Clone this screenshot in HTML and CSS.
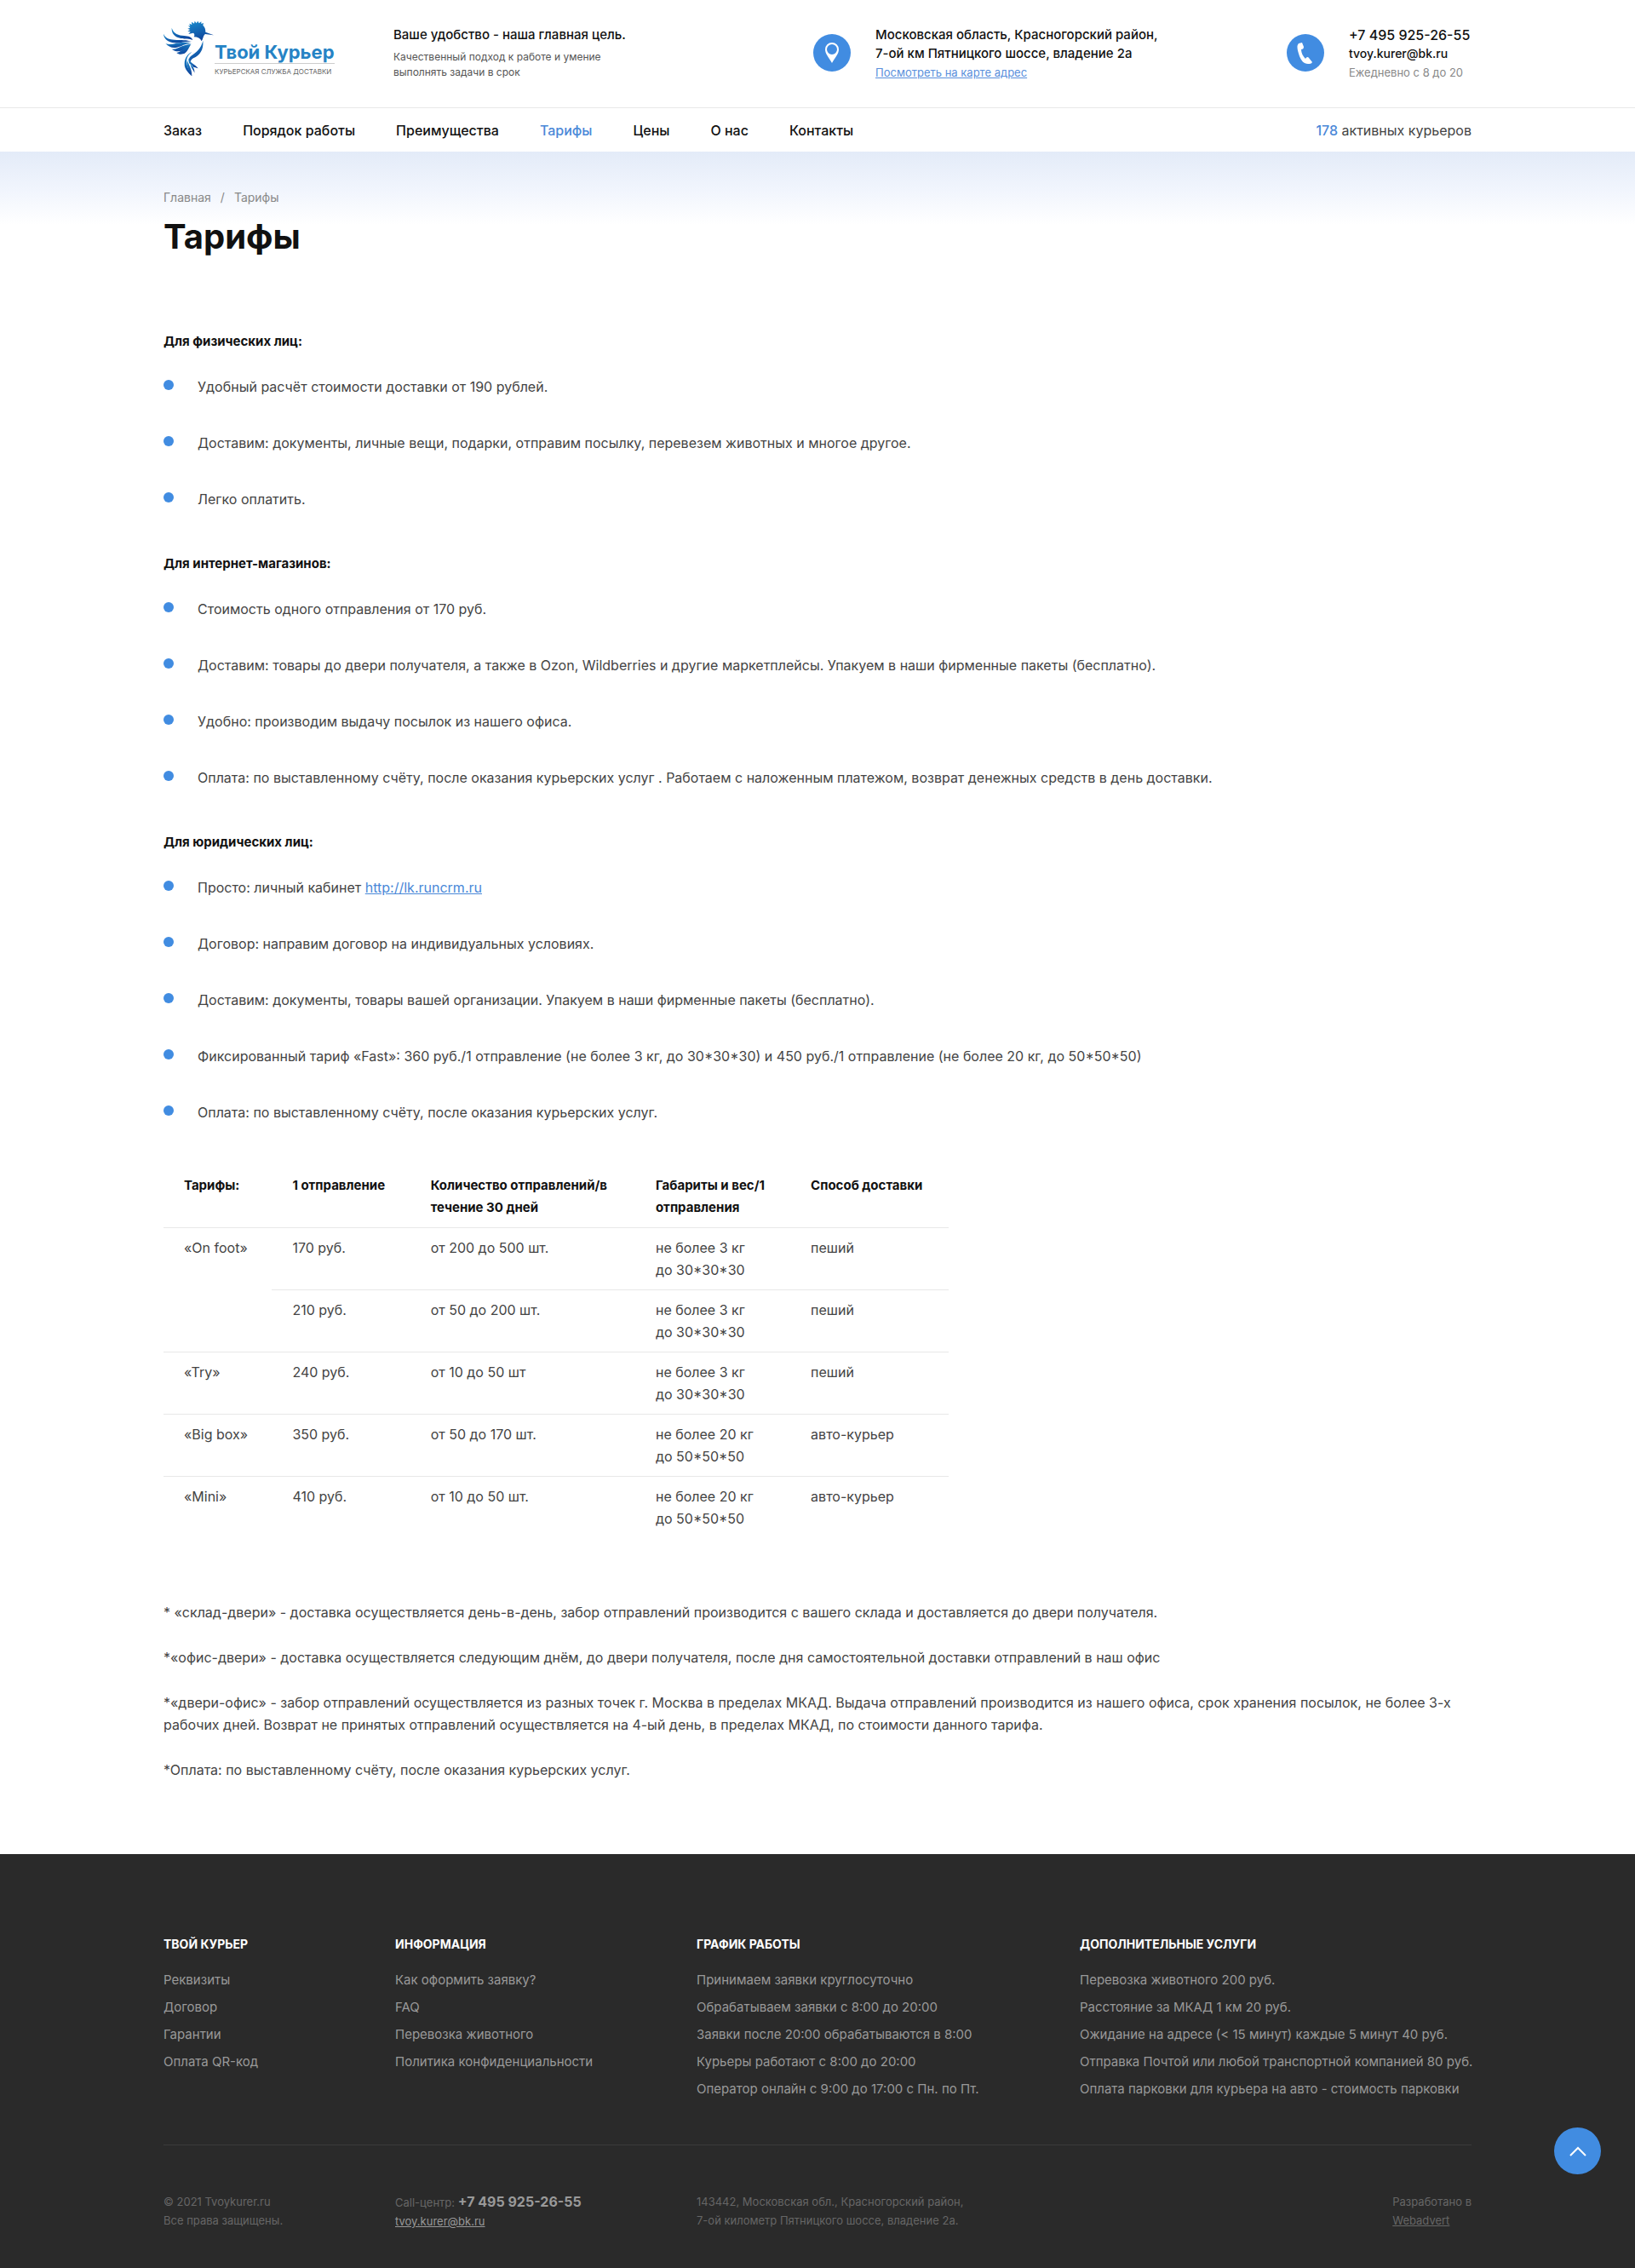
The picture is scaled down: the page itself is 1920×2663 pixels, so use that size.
FILE: index.html
```html
<!DOCTYPE html>
<html lang="ru">

<head>
    <meta charset="UTF-8">
    <meta name="viewport" content="width=device-width, initial-scale=1.0">
    <title>Тарифы</title>
    <link rel="stylesheet" href="styles.css">
</head>

<body>
    <header class="header">
        <div class="container header-top">
            <a href="#" class="logo">
                <svg class="logo-bird" viewBox="36 70 180 198" aria-hidden="true">
                    <defs>
                        <linearGradient id="bird" x1="0" y1="0" x2="0.4" y2="1">
                            <stop offset="0" stop-color="#1a8fd0" />
                            <stop offset="1" stop-color="#0f459c" />
                        </linearGradient>
                    </defs>
                    <g fill="url(#bird)">
                        <!-- голова с хохолком -->
                        <path d="M123 87l7 3-3-9 9 4-1-10 9 6 2-9 6 8 5-8 4 8 8-6 0 8 8-3-2 8c7 6 9 14 9 24l29 11-30-4c-8 6-7 17-13 25-4-10-14-15-27-15 4-6 2-11-2-14l-17 4 7-8-10-2 9-5-9-4 9-3z" />
                        <!-- крылья -->
                        <path d="M65 96c7 22 24 26 44 28 16 1 26 5 30 15-12-6-26-2-42-6-22-5-33-17-32-37z" />
                        <path d="M36 117c8 17 20 19 38 21 24 2 45-1 61 7-25-3-37 7-59 4-25-3-39-14-40-32z" />
                        <path d="M43 150c18 10 35-1 57-2 14-1 25 0 34 3-21-1-32 10-51 14-17 3-31-3-40-15z" />
                        <path d="M65 171c14 2 24-6 38-11 11-4 21-7 31-7-14 7-19 17-32 23-13 5-27 3-37-5z" />
                        <path d="M82 184c15-2 22-17 51-30-10 13-12 30-28 34-9 3-17 1-23-4z" />
                        <!-- туловище -->
                        <path d="M175 141c3 33-11 51-34 62-8 5-11 12-13 20-3-11-4-20 4-27 20-15 36-26 43-55z" />
                        <!-- хвост -->
                        <path d="M136 181c-14 11-20 22-18 39 1 18 12 26 18 46-12-12-27-24-26-44 0-19 10-33 26-41z" />
                        <path d="M125 203c3 18 24 22 33 36-16-6-20-3-20-10-9-4-16-13-13-26z" />
                        <path d="M120 211c6 20 16 27 16 55-9-17-20-31-16-55z" />
                        <path d="M131 222c7 10 16 17 14 33-3-12-14-18-14-33z" />
                    </g>
                </svg>
                <span class="logo-text">
                    <span class="logo-name">Твой Курьер</span>
                    <span class="logo-tagline">Курьерская служба доставки</span>
                </span>
            </a>

            <div class="slogan">
                <p class="strong">Ваше удобство - наша главная цель.</p>
                <p class="slogan-text">Качественный подход к работе и умение<br>выполнять задачи в срок</p>
            </div>

            <div class="contact">
                <svg class="contact-icon" viewBox="0 0 44 44" aria-hidden="true">
                    <circle cx="22" cy="22" r="22" fill="#418ce1" />
                    <path fill="#fff" fill-rule="evenodd" d="M22 10a8 8 0 0 1 8 8c0 5-4 9-8 16-4-7-8-11-8-16a8 8 0 0 1 8-8zm0 2a6 6 0 1 0 0 12 6 6 0 0 0 0-12z" />
                </svg>
                <div>
                    <p class="strong">Московская область, Красногорский район,</p>
                    <p class="strong">7-ой км Пятницкого шоссе, владение 2а</p>
                    <a href="#" class="map-link">Посмотреть на карте адрес</a>
                </div>
            </div>

            <div class="contact">
                <svg class="contact-icon" viewBox="0 0 44 44" aria-hidden="true">
                    <circle cx="22" cy="22" r="22" fill="#418ce1" />
                    <path fill="#fff" d="M14 11l4-1 2 5c0 2-1 3-3 3 0 4 2 8 5 11 1-2 3-3 4-1l4 5c-1 2-3 2-5 2-5 0-8-4-10-9-2-6-4-12-1-15z" />
                </svg>
                <div>
                    <a href="tel:+74959252655" class="phone">+7 495 925-26-55</a>
                    <a href="mailto:tvoy.kurer@bk.ru" class="mail">tvoy.kurer@bk.ru</a>
                    <p class="schedule">Ежедневно с 8 до 20</p>
                </div>
            </div>
        </div>

        <div class="nav-line">
            <div class="container nav-row">
                <nav class="nav">
                    <a href="#">Заказ</a>
                    <a href="#">Порядок работы</a>
                    <a href="#">Преимущества</a>
                    <a href="#" class="active">Тарифы</a>
                    <a href="#">Цены</a>
                    <a href="#">О нас</a>
                    <a href="#">Контакты</a>
                </nav>
                <p class="couriers"><b>178</b> активных курьеров</p>
            </div>
        </div>
    </header>

    <main class="main">
        <div class="container">
            <div class="breadcrumbs">
                <a href="#">Главная</a>
                <span>/</span>
                <span>Тарифы</span>
            </div>
            <h1>Тарифы</h1>

            <div class="content">
                <h2>Для физических лиц:</h2>
                <ul>
                    <li>Удобный расчёт стоимости доставки от 190 рублей.</li>
                    <li>Доставим: документы, личные вещи, подарки, отправим посылку, перевезем животных и многое другое.</li>
                    <li>Легко оплатить.</li>
                </ul>

                <h2>Для интернет-магазинов:</h2>
                <ul>
                    <li>Стоимость одного отправления от 170 руб.</li>
                    <li>Доставим: товары до двери получателя, а также в Ozon, Wildberries и другие маркетплейсы. Упакуем в наши фирменные пакеты (бесплатно).</li>
                    <li>Удобно: производим выдачу посылок из нашего офиса.</li>
                    <li>Оплата: по выставленному счёту, после оказания курьерских услуг . Работаем с наложенным платежом, возврат денежных средств в день доставки.</li>
                </ul>

                <h2>Для юридических лиц:</h2>
                <ul>
                    <li>Просто: личный кабинет <a href="http://lk.runcrm.ru">http://lk.runcrm.ru</a></li>
                    <li>Договор: направим договор на индивидуальных условиях.</li>
                    <li>Доставим: документы, товары вашей организации. Упакуем в наши фирменные пакеты (бесплатно).</li>
                    <li>Фиксированный тариф «Fast»: 360 руб./1 отправление (не более 3 кг, до 30*30*30) и 450 руб./1 отправление (не более 20 кг, до 50*50*50)</li>
                    <li>Оплата: по выставленному счёту, после оказания курьерских услуг.</li>
                </ul>

                <table class="tariffs">
                    <thead>
                        <tr>
                            <th>Тарифы:</th>
                            <th>1 отправление</th>
                            <th>Количество отправлений/в<br>течение 30 дней</th>
                            <th>Габариты и вес/1<br>отправления</th>
                            <th>Способ доставки</th>
                        </tr>
                    </thead>
                    <tbody>
                        <tr>
                            <td rowspan="2">«On foot»</td>
                            <td>170 руб.</td>
                            <td>от 200 до 500 шт.</td>
                            <td>не более 3 кг<br>до 30*30*30</td>
                            <td>пеший</td>
                        </tr>
                        <tr>
                            <td>210 руб.</td>
                            <td>от 50 до 200 шт.</td>
                            <td>не более 3 кг<br>до 30*30*30</td>
                            <td>пеший</td>
                        </tr>
                        <tr>
                            <td>«Try»</td>
                            <td>240 руб.</td>
                            <td>от 10 до 50 шт</td>
                            <td>не более 3 кг<br>до 30*30*30</td>
                            <td>пеший</td>
                        </tr>
                        <tr>
                            <td>«Big box»</td>
                            <td>350 руб.</td>
                            <td>от 50 до 170 шт.</td>
                            <td>не более 20 кг<br>до 50*50*50</td>
                            <td>авто-курьер</td>
                        </tr>
                        <tr>
                            <td>«Mini»</td>
                            <td>410 руб.</td>
                            <td>от 10 до 50 шт.</td>
                            <td>не более 20 кг<br>до 50*50*50</td>
                            <td>авто-курьер</td>
                        </tr>
                    </tbody>
                </table>

                <p>* «склад-двери» - доставка осуществляется день-в-день, забор отправлений производится с вашего склада и доставляется до двери получателя.</p>
                <p>*«офис-двери» - доставка осуществляется следующим днём, до двери получателя, после дня самостоятельной доставки отправлений в наш офис</p>
                <p>*«двери-офис» - забор отправлений осуществляется из разных точек г. Москва в пределах МКАД. Выдача отправлений производится из нашего офиса, срок хранения посылок, не более 3-х рабочих дней. Возврат не принятых отправлений осуществляется на 4-ый день, в пределах МКАД, по стоимости данного тарифа.</p>
                <p>*Оплата: по выставленному счёту, после оказания курьерских услуг.</p>
            </div>
        </div>
    </main>

    <footer class="footer">
        <div class="container">
            <div class="footer-grid footer-menu">
                <div>
                    <h3>Твой курьер</h3>
                    <ul>
                        <li><a href="#">Реквизиты</a></li>
                        <li><a href="#">Договор</a></li>
                        <li><a href="#">Гарантии</a></li>
                        <li><a href="#">Оплата QR-код</a></li>
                    </ul>
                </div>
                <div>
                    <h3>Информация</h3>
                    <ul>
                        <li><a href="#">Как оформить заявку?</a></li>
                        <li><a href="#">FAQ</a></li>
                        <li><a href="#">Перевозка животного</a></li>
                        <li><a href="#">Политика конфиденциальности</a></li>
                    </ul>
                </div>
                <div>
                    <h3>График работы</h3>
                    <ul>
                        <li>Принимаем заявки круглосуточно</li>
                        <li>Обрабатываем заявки с 8:00 до 20:00</li>
                        <li>Заявки после 20:00 обрабатываются в 8:00</li>
                        <li>Курьеры работают с 8:00 до 20:00</li>
                        <li>Оператор онлайн с 9:00 до 17:00 с Пн. по Пт.</li>
                    </ul>
                </div>
                <div>
                    <h3>Дополнительные услуги</h3>
                    <ul>
                        <li>Перевозка животного 200 руб.</li>
                        <li>Расстояние за МКАД 1 км 20 руб.</li>
                        <li>Ожидание на адресе (&lt; 15 минут) каждые 5 минут 40 руб.</li>
                        <li>Отправка Почтой или любой транспортной компанией 80 руб.</li>
                        <li>Оплата парковки для курьера на авто - стоимость парковки</li>
                    </ul>
                </div>
            </div>

            <div class="footer-grid footer-bottom">
                <p>© 2021 Tvoykurer.ru<br>Все права защищены.</p>
                <p>Call-центр: <a href="tel:+74959252655" class="footer-phone">+7 495 925-26-55</a><br><a href="mailto:tvoy.kurer@bk.ru" class="footer-mail">tvoy.kurer@bk.ru</a></p>
                <p>143442, Московская обл., Красногорский район,<br>7-ой километр Пятницкого шоссе, владение 2а.</p>
                <p class="developer">Разработано в<br><a href="#">Webadvert</a></p>
            </div>
        </div>
    </footer>

    <button type="button" class="to-top" aria-label="Наверх">
        <svg viewBox="0 0 20 12" aria-hidden="true">
            <path d="M1 11l9-9 9 9" fill="none" stroke="#fff" stroke-width="2" />
        </svg>
    </button>

    <script>
        document.querySelector('.to-top').addEventListener('click', function () {
            window.scrollTo({ top: 0, behavior: 'smooth' });
        });
    </script>
</body>

</html>
```

FILE: styles.css
```css
* {
    box-sizing: border-box;
}

body {
    margin: 0;
    font-family: Inter, 'Noto Sans', sans-serif;
    font-size: 16px;
    line-height: 26px;
    color: #444;
    background-color: #fff;
}

h1,
h2,
h3,
p,
ul {
    margin: 0;
    padding: 0;
}

ul {
    list-style: none;
}

a {
    color: inherit;
    text-decoration: none;
}

.container {
    padding: 0 10%;
}

/* шапка */
.header-top {
    display: grid;
    grid-template-columns: 270fr 493fr 556fr 217fr;
    height: 126px;
    padding-top: 24px;
}

.header-top > * {
    min-width: 0;
    white-space: nowrap;
}

.logo {
    display: flex;
}

.logo-bird {
    width: 60px;
    height: 66px;
}

.logo-text {
    padding-top: 24px;
}

.logo-name {
    display: block;
    border-bottom: 1px solid #ccc;
    font-size: 22px;
    line-height: 26px;
    font-weight: 700;
    color: #2583c5;
}

.logo-tagline {
    display: block;
    padding-top: 2px;
    font-size: 8px;
    line-height: 14px;
    color: #666;
    text-transform: uppercase;
}

.strong {
    font-size: 15px;
    line-height: 22px;
    font-weight: 500;
    color: #111;
}

.slogan {
    padding-top: 6px;
}

.slogan-text {
    padding-top: 6px;
    font-size: 12px;
    line-height: 18px;
    color: #555;
}

.contact {
    display: flex;
    gap: 29px;
    padding-top: 6px;
}

.contact-icon {
    flex: none;
    width: 44px;
    height: 44px;
    margin-top: 10px;
}

.map-link,
.schedule,
.phone,
.mail {
    display: block;
    font-size: 13px;
    line-height: 22px;
}

.map-link {
    color: #5a8fdc;
    text-decoration: underline;
}

.schedule {
    color: #888;
}

.phone,
.mail {
    font-weight: 500;
    color: #111;
}

.phone {
    font-size: 16px;
}

.mail {
    font-size: 14px;
}

.nav-line {
    border-top: 1px solid #e8e8e8;
}

.nav-row {
    display: flex;
    justify-content: space-between;
    align-items: center;
    height: 51px;
}

.nav {
    display: flex;
    gap: 48px;
    font-weight: 500;
    color: #111;
}

.nav .active,
.couriers b {
    color: #4a88d8;
}

.couriers b {
    font-weight: 500;
}

/* контент */
.main {
    padding: 41px 0 86px;
    background: linear-gradient(#e3ebf8, #f1f5fd 45px, #fff 86px);
}

.breadcrumbs {
    display: flex;
    gap: 11px;
    font-size: 14px;
    color: #888;
}

h1 {
    padding-top: 8px;
    font-size: 40px;
    line-height: 50px;
    color: #111;
}

.content {
    padding-top: 85px;
}

.content h2 {
    margin-bottom: 27px;
    font-size: 15px;
    line-height: 26px;
    color: #111;
}

.content ul {
    margin-bottom: 50px;
}

.content li {
    position: relative;
    padding-left: 40px;
}

.content li + li {
    margin-top: 40px;
}

.content li::before {
    content: "";
    position: absolute;
    left: 0;
    top: 5px;
    width: 12px;
    height: 12px;
    border-radius: 50%;
    background-color: #418ce1;
}

.content li a {
    color: #4a88d8;
    text-decoration: underline;
}

.content p + p {
    margin-top: 27px;
}

.tariffs {
    width: 60%;
    margin-bottom: 74px;
    border-collapse: collapse;
}

.tariffs th,
.tariffs td {
    padding: 10px 24px;
    text-align: left;
    vertical-align: top;
    white-space: nowrap;
}

.tariffs th {
    font-size: 15px;
    font-weight: 700;
    color: #111;
}

.tariffs td {
    border-top: 1px solid #e8e8e8;
}

/* подвал */
.footer {
    padding-top: 93px;
    background-color: #2a2a2a;
    color: #999;
    font-size: 15px;
}

.footer-grid {
    display: grid;
    grid-template-columns: 272fr 354fr 450fr 460fr;
}

.footer-grid > * {
    min-width: 0;
    white-space: nowrap;
}

.footer-menu {
    padding-bottom: 49px;
    border-bottom: 1px solid #3b3b3b;
}

.footer h3 {
    margin-bottom: 13px;
    font-size: 14px;
    line-height: 26px;
    color: #fff;
    text-transform: uppercase;
}

.footer li {
    line-height: 32px;
}

.footer-bottom {
    padding: 55px 0 45px;
    font-size: 13px;
    line-height: 22px;
    color: #666;
}

.footer-phone {
    font-size: 16px;
    font-weight: 700;
    color: #999;
}

.footer-mail {
    color: #999;
}

.footer-mail,
.developer a {
    text-decoration: underline;
}

.developer {
    justify-self: end;
}

.to-top {
    position: fixed;
    right: 40px;
    bottom: 110px;
    display: flex;
    align-items: center;
    justify-content: center;
    width: 55px;
    height: 55px;
    padding: 0;
    border: 0;
    border-radius: 50%;
    background-color: #418ce1;
    cursor: pointer;
}

.to-top svg {
    width: 20px;
    height: 12px;
}
```
